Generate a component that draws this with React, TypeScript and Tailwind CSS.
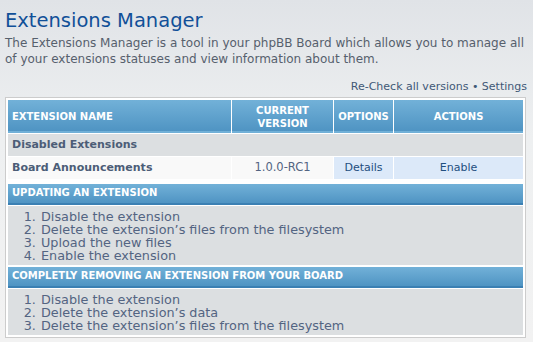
import React from 'react'

const font = { fontFamily: '"DejaVu Sans", Verdana, sans-serif' }

const headBg = 'bg-[linear-gradient(to_bottom,#72b1d8,#4f94c3)] border-b-2 border-[#3b80b3]'

function Steps({ items }: { items: string[] }) {
  return (
    <ol className="list-decimal pl-[32px] pt-[4px] pb-[3px] text-[12.8px] leading-[13px] text-[#536482]">
      {items.map((t) => (
        <li key={t} className="pl-[1px]">
          {t}
        </li>
      ))}
    </ol>
  )
}

export default function App() {
  return (
    <div
      className="w-[533px] h-[342px] overflow-hidden bg-[linear-gradient(to_bottom,#e0e3e7,#eef0f1_40%,#f2f2f2)] px-[5px] pt-[8px]"
      style={font}
    >
      <h1 className="text-[19.5px] leading-[26px] text-[#115098]">Extensions Manager</h1>
      <p className="mt-[1px] text-[12px] leading-[16px] text-[#56606d]">
        The Extensions Manager is a tool in your phpBB Board which allows you to manage all of your extensions
        statuses and view information about them.
      </p>

      <div className="mt-[13px] pr-[1px] text-right text-[11px] leading-[14px] text-[#3f5876]">
        Re-Check all versions • Settings
      </div>

      <div className="mt-[3px] w-[521px] border border-[#cccccc] bg-white p-[2px]">
        <table className="w-full border-separate border-spacing-0 text-[11px] text-[#536482]">
          <thead>
            <tr className={headBg}>
              <th className="h-[33px] w-[224px] border-r border-white pl-[4px] text-left text-[10px] font-bold leading-[13px] text-white">
                EXTENSION NAME
              </th>
              <th className="w-[102px] border-r border-white text-center text-[10px] font-bold leading-[13px] text-white">
                CURRENT
                <br />
                VERSION
              </th>
              <th className="w-[60px] border-r border-white text-center text-[10px] font-bold leading-[13px] text-white">
                OPTIONS
              </th>
              <th className="text-center text-[10px] font-bold leading-[13px] text-white">ACTIONS</th>
            </tr>
          </thead>
          <tbody>
            <tr>
              <td
                colSpan={4}
                className="h-[23px] border-t border-white bg-[#dcdfe1] pl-[4px] text-[11px] font-bold text-[#4c5d77]"
              >
                Disabled Extensions
              </td>
            </tr>
            <tr>
              <td className="h-[23px] border-t border-r border-white bg-[#f9f9f9] pl-[4px] text-[11px] font-bold text-[#4c5d77]">
                Board Announcements
              </td>
              <td className="border-t border-r border-white bg-[#f9f9f9] text-center text-[11.5px]">1.0.0-RC1</td>
              <td className="border-t border-r border-white bg-[#dce9f9] text-center text-[#1f4f7f]">Details</td>
              <td className="border-t border-white bg-[#dce9f9] text-center text-[#1f4f7f]">Enable</td>
            </tr>
          </tbody>
        </table>

        <div className="mt-[5px]">
          <div className={`${headBg} h-[21px] pl-[4px] text-[10px] font-bold leading-[18px] text-white`}>
            UPDATING AN EXTENSION
          </div>
          <div className="mt-[1px] bg-[#dcdfe1]">
            <Steps
              items={[
                'Disable the extension',
                'Delete the extension’s files from the filesystem',
                'Upload the new files',
                'Enable the extension',
              ]}
            />
          </div>
        </div>

        <div className="mt-[2px]">
          <div className={`${headBg} h-[21px] pl-[4px] text-[10px] font-bold leading-[18px] text-white`}>
            COMPLETLY REMOVING AN EXTENSION FROM YOUR BOARD
          </div>
          <div className="mt-[1px] bg-[#dcdfe1]">
            <Steps
              items={[
                'Disable the extension',
                'Delete the extension’s data',
                'Delete the extension’s files from the filesystem',
              ]}
            />
          </div>
        </div>
      </div>
    </div>
  )
}
